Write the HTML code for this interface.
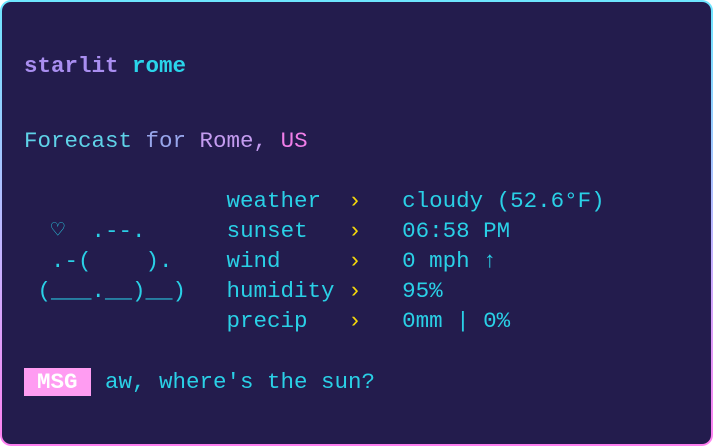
<!DOCTYPE html>
<html><head><meta charset="utf-8"><style>
html,body{margin:0;padding:0;background:#fff;width:713px;height:446px;overflow:hidden}
.frame{position:absolute;left:0;top:0;width:713px;height:446px;border-radius:11px;background:linear-gradient(180deg,#6de6ff,#c8b0ff 60%,#ff80f0)}
.in{position:absolute;left:2px;top:2px;right:2px;bottom:2px;border-radius:9px;background:#231c4d}
.t{position:absolute;font-family:"Liberation Mono",monospace;font-size:22.5px;line-height:30px;white-space:pre;color:#2ad0e6}
.c{color:#2ad0e6}.y{color:#f5d90a}
</style></head><body>
<div class="frame"><div class="in"></div></div>
<div class="t" style="left:24px;top:51px;font-weight:bold"><span style="color:#a98ef0">starlit</span> <span style="color:#2ad4ea">rome</span></div>
<div class="t" style="left:24px;top:126px"><span style="color:#5fd2e8">Forecast </span><span style="color:#98a6ec">for </span><span style="color:#c49cf0">Rome, </span><span style="color:#f07ee8">US</span></div>
<div class="t" style="left:24px;top:186px"><span>               weather  <span class="y">›</span>   cloudy (52.6°F)
  ♡  .--.      sunset   <span class="y">›</span>   06:58 PM
  .-(    ).    wind     <span class="y">›</span>   0 mph ↑
 (___.__)__)   humidity <span class="y">›</span>   95%
               precip   <span class="y">›</span>   0mm | 0%</span></div>
<div style="position:absolute;left:24px;top:368px;width:67px;height:28px;background:#ff9cf2"></div>
<div class="t" style="left:37px;top:367px;color:#fff;font-weight:bold">MSG</div>
<div class="t" style="left:105px;top:367px">aw, where's the sun?</div>
</body></html>
